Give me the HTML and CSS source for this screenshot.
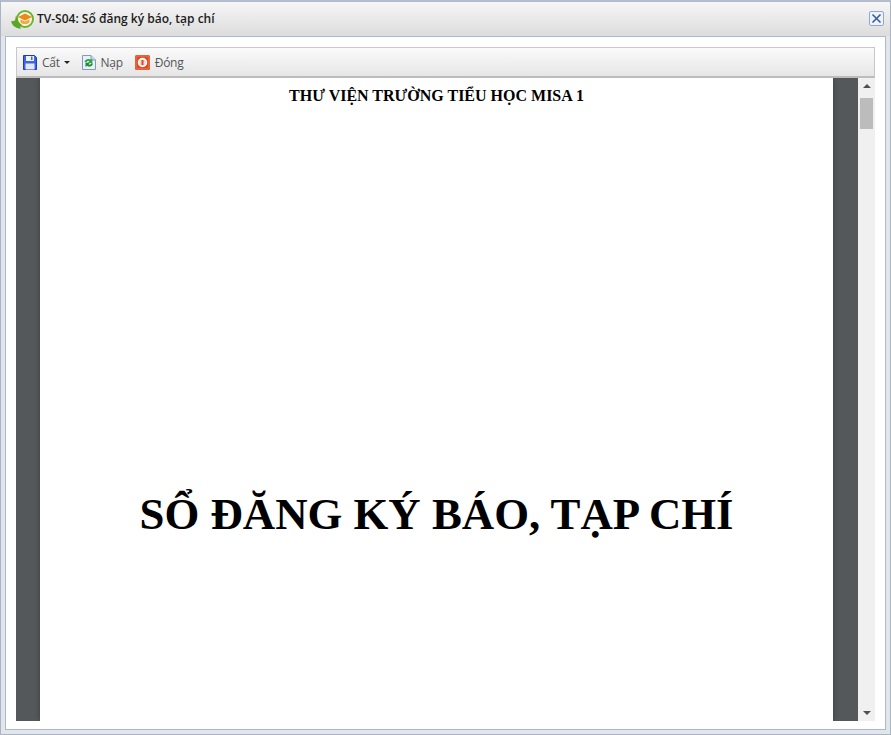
FILE: index.html
```html
<!DOCTYPE html>
<html lang="vi">
<head>
<meta charset="utf-8">
<title>TV-S04: Sổ đăng ký báo, tạp chí</title>
<link rel="stylesheet" href="styles.css">
</head>
<body>
<div class="window">
  <header class="titlebar">
    <svg class="app-icon" width="23" height="20" viewBox="0 0 23 20">
      <circle cx="14" cy="10" r="8" fill="#fdf6e3" stroke="#6bb52e" stroke-width="2"/>
      <path d="M0 12.500 L4 11.500 L5 6.500 C6 11 8 14 11 16 L9 17.500 L10 19.500 C6 19.500 2 18 0 12.500Z" fill="#5aa726"/>
      <path d="M7 8 L14 4.500 L21 8 L14 11.500Z" fill="#e98a1e"/>
      <path d="M9.500 10.200 L14 12.500 L18.500 10.200 V13.500 C16 15.500 12 15.500 9.500 13.500Z" fill="#f2a93f"/>
    </svg>
    <span class="title">TV-S04: Sổ đăng ký báo, tạp chí</span>
    <button class="close" aria-label="Đóng">
      <svg width="11" height="11" viewBox="0 0 11 11"><path d="M1.500 1.500 L9.500 9.500 M9.500 1.500 L1.500 9.500" stroke="#3558ad" stroke-width="1.600" fill="none"/></svg>
    </button>
  </header>
  <div class="body">
    <nav class="toolbar">
      <div class="tool tool-save">
        <svg width="14" height="15" viewBox="0 0 14 15">
          <path d="M.5.5H11.500L13.500 2.500V14.500H.5Z" fill="#3f66dc" stroke="#1d3bb5"/>
          <rect x="3" y="1" width="8" height="5" fill="#eef2fd"/>
          <rect x="8" y="1.500" width="1.500" height="3.500" fill="#3f66dc"/>
          <rect x="2.500" y="8.500" width="9" height="6" fill="#dfe6f8"/>
        </svg>
        <span>Cất</span>
        <i class="caret"></i>
      </div>
      <div class="tool tool-load">
        <svg width="14" height="15" viewBox="0 0 14 15">
          <path d="M.5.5H9L13.500 5V14.500H.5Z" fill="#e9f0fa" stroke="#7f9bc4"/>
          <path d="M9 .5V5H13.500" fill="#cfdcf0" stroke="#7f9bc4"/>
          <path d="M2.500 7 C3 4 7 3 8.800 4.800 L10.300 3.500 V8 H6 L7.500 6.500 C6.500 5.800 5 6 4.600 7.500Z" fill="#2fa53a"/>
          <path d="M11 8.500 C10.500 11.500 7 12.500 5 10.700 L3.500 12 V7.800 H8 L6.500 9.200 C7.500 10 9 9.700 9.300 8.300Z" fill="#1f8a30"/>
        </svg>
        <span>Nạp</span>
      </div>
      <div class="tool tool-close">
        <svg width="15" height="15" viewBox="0 0 15 15">
          <rect width="15" height="15" rx="1.500" fill="#dc4a26"/>
          <rect x="1" y="1" width="13" height="13" rx="1" fill="none" stroke="#ee7a50"/>
          <circle cx="7.500" cy="7.500" r="4" fill="#f8d8cc" stroke="#fff" stroke-width="1.500"/>
          <path d="M7.500 5V10" stroke="#dc4a26" stroke-width="2"/>
        </svg>
        <span>Đóng</span>
      </div>
    </nav>
    <div class="viewer">
      <div class="pages">
        <article class="page">
          <h2 class="school">THƯ VIỆN TRƯỜNG TIỂU HỌC MISA 1</h2>
          <h1 class="book">SỔ ĐĂNG KÝ BÁO, TẠP CHÍ</h1>
        </article>
      </div>
      <div class="scrollbar">
        <i class="arrow-up"></i>
        <div class="track"><div class="thumb"></div></div>
        <i class="arrow-down"></i>
      </div>
    </div>
  </div>
</div>
</body>
</html>
```
FILE: styles.css
```css
* { box-sizing: border-box; }
html, body { margin: 0; height: 100%; }
body { background: #fff; font-family: "Open Sans", "Noto Sans", sans-serif; overflow: hidden; }

.window {
  width: 891px;
  height: 735px;
  display: flex;
  flex-direction: column;
  background: #e2e5ea;
  border: 1px solid #a9b4c4;
  border-top: 2px solid #b4bdcb;
  padding: 0 4px 4px;
}

.titlebar {
  height: 34px;
  flex: none;
  display: flex;
  align-items: center;
  background: linear-gradient(#f6f6f6, #dcdcdc);
  margin: 0 -4px;
  padding: 0 6px 1px 10px;
}
.app-icon { flex: none; margin-right: 3px; }
.title { font-size: 12px; font-weight: 600; color: #1c1c1c; flex: 1; margin-top: -1px; }
.close {
  width: 15px;
  height: 15px;
  padding: 0;
  margin-top: -1px;
  display: flex;
  align-items: center;
  justify-content: center;
  background: #eef3fb;
  border: 1px solid #8fa9d6;
  border-radius: 2px;
}

.body {
  flex: 1;
  min-height: 0;
  display: flex;
  flex-direction: column;
  background: #fff;
  border: 1px solid #a9bbd2;
  padding: 10px 10px 8px 10px;
}

.toolbar {
  height: 31px;
  flex: none;
  display: flex;
  align-items: center;
  gap: 12px;
  padding: 0 6px;
  background: linear-gradient(#fafafa, #e6e6e6);
  border: 1px solid #c8c8c8;
  border-bottom: 2px solid #bcbcbc;
}
.tool { display: flex; align-items: center; gap: 5px; font-size: 12px; color: #555; letter-spacing: -.3px; }
.caret {
  width: 0;
  height: 0;
  border: 3px solid transparent;
  border-top: 3px solid #222;
  border-bottom: 0;
  margin-left: -1px;
}

.viewer { flex: 1; min-height: 0; display: flex; }
.pages {
  flex: 1;
  min-width: 0;
  padding: 0 25px 0 24px;
  background: #54585b;
  overflow: hidden;
}
.page {
  height: 100%;
  background: #fff;
  text-align: center;
  font-family: "Liberation Serif", "Times New Roman", serif;
  color: #000;
  overflow: hidden;
  box-shadow: 0 0 5px rgba(0, 0, 0, .3);
}
.school { margin: 0; padding-top: 8px; font-size: 16px; line-height: 20px; font-weight: 700; }
.book { margin: 0; padding-top: 382px; font-size: 44.8px; line-height: 53px; font-weight: 700; }

.scrollbar {
  width: 17px;
  flex: none;
  display: flex;
  flex-direction: column;
  align-items: center;
  background: #f0f0f0;
  padding: 6px 0;
}
.arrow-up, .arrow-down { width: 0; height: 0; flex: none; border: 4px solid transparent; }
.arrow-up { border-bottom: 4px solid #505050; border-top: 0; }
.arrow-down { border-top: 4px solid #505050; border-bottom: 0; }
.track { flex: 1; width: 100%; padding: 10px 2px 5px; }
.thumb { height: 31px; background: #bcbcbc; }
```
